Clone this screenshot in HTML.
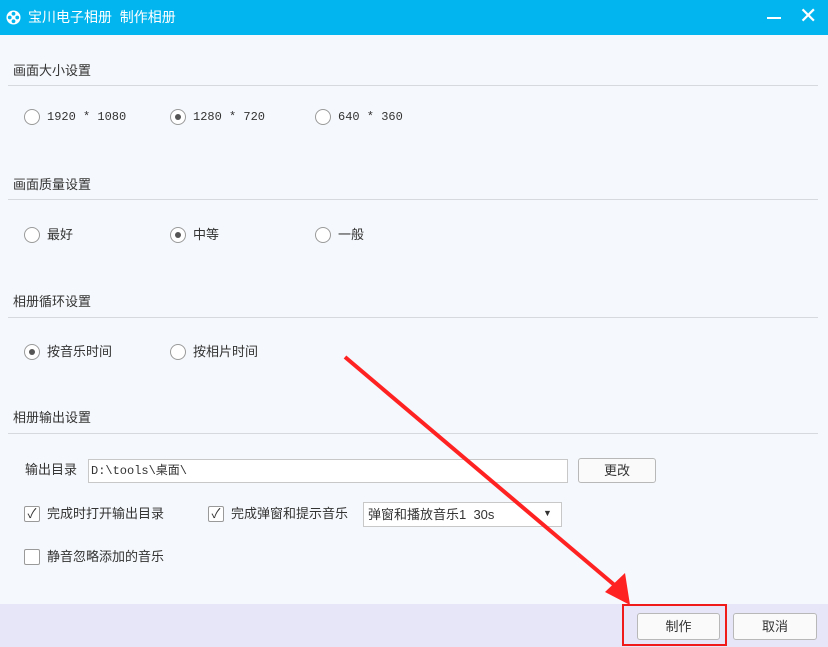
<!DOCTYPE html>
<html><head><meta charset="utf-8"><style>
*{margin:0;padding:0;box-sizing:border-box}
body{width:828px;height:647px;overflow:hidden;background:#f5f8fc;font-family:"Liberation Sans","Noto Sans CJK SC",sans-serif;font-size:13px;color:#333;position:relative}
.abs{position:absolute}
.title{left:0;top:0;width:828px;height:35px;background:#02b5ee;color:#fff;font-size:14px}
.hd{left:13px;font-size:13px;color:#333;line-height:16px}
.ln{left:8px;width:810px;height:1px;background:#d6d9de}
.r{width:16px;height:16px;border:1px solid #9a9a9a;border-radius:50%;background:#fff}
.r.on::after{content:"";position:absolute;left:4px;top:4px;width:6px;height:6px;border-radius:50%;background:#555}
.lab{font-size:13px;color:#333;line-height:16px}
.mono{font-family:"Liberation Mono","Noto Sans CJK SC",monospace;font-size:12px}
.cb{width:16px;height:16px;border:1px solid #9a9a9a;background:#fff;border-radius:2px;font-size:13px;line-height:14px;text-align:center;color:#333}
.btn{border:1px solid #b8b8b8;border-radius:3px;background:#fafafa;text-align:center;font-size:13px}
</style></head><body>
<div class="abs title">
 <svg class="abs" style="left:6px;top:10px" width="15" height="15" viewBox="0 0 16 16"><circle cx="8" cy="8" r="7.5" fill="#fff"/><circle cx="8" cy="4" r="2" fill="#02b5ee"/><circle cx="8" cy="12" r="2" fill="#02b5ee"/><circle cx="4" cy="8" r="2" fill="#02b5ee"/><circle cx="12" cy="8" r="2" fill="#02b5ee"/></svg>
 <span class="abs" style="left:28px;top:8px;line-height:18px">宝川电子相册&nbsp;&nbsp;制作相册</span>
 <div class="abs" style="left:767px;top:17px;width:14px;height:2px;background:#fff"></div>
 <span class="abs" style="left:799px;top:5px;font-size:22px;line-height:22px">✕</span>
</div>

<div class="abs hd" style="top:63px">画面大小设置</div><div class="abs ln" style="top:85px"></div>
<div class="abs r" style="left:24px;top:109px"></div><span class="abs lab mono" style="left:47px;top:109px">1920 * 1080</span>
<div class="abs r on" style="left:170px;top:109px"></div><span class="abs lab mono" style="left:193px;top:109px">1280 * 720</span>
<div class="abs r" style="left:315px;top:109px"></div><span class="abs lab mono" style="left:338px;top:109px">640 * 360</span>

<div class="abs hd" style="top:177px">画面质量设置</div><div class="abs ln" style="top:199px"></div>
<div class="abs r" style="left:24px;top:227px"></div><span class="abs lab" style="left:47px;top:227px">最好</span>
<div class="abs r on" style="left:170px;top:227px"></div><span class="abs lab" style="left:193px;top:227px">中等</span>
<div class="abs r" style="left:315px;top:227px"></div><span class="abs lab" style="left:338px;top:227px">一般</span>

<div class="abs hd" style="top:294px">相册循环设置</div><div class="abs ln" style="top:317px"></div>
<div class="abs r on" style="left:24px;top:344px"></div><span class="abs lab" style="left:47px;top:344px">按音乐时间</span>
<div class="abs r" style="left:170px;top:344px"></div><span class="abs lab" style="left:193px;top:344px">按相片时间</span>

<div class="abs hd" style="top:410px">相册输出设置</div><div class="abs ln" style="top:433px"></div>
<span class="abs lab" style="left:25px;top:462px">输出目录</span>
<div class="abs" style="left:88px;top:459px;width:480px;height:24px;border:1px solid #c8c8c8;background:#fff"><span class="abs mono" style="left:2px;top:4px;line-height:14px">D:\tools\桌面\</span></div>
<div class="abs btn" style="left:578px;top:458px;width:78px;height:25px;line-height:23px">更改</div>

<div class="abs cb" style="left:24px;top:506px">✓</div><span class="abs lab" style="left:47px;top:506px">完成时打开输出目录</span>
<div class="abs cb" style="left:208px;top:506px">✓</div><span class="abs lab" style="left:231px;top:506px">完成弹窗和提示音乐</span>
<div class="abs" style="left:363px;top:502px;width:199px;height:25px;border:1px solid #c8c8c8;background:#fff"><span class="abs" style="left:4px;top:4px;line-height:16px">弹窗和播放音乐1&nbsp;&nbsp;30s</span><span class="abs" style="left:179px;top:5px;font-size:9px">▼</span></div>

<div class="abs cb" style="left:24px;top:549px"></div><span class="abs lab" style="left:47px;top:549px">静音忽略添加的音乐</span>

<div class="abs" style="left:0;top:604px;width:828px;height:43px;background:#e6e6f8"></div>
<div class="abs btn" style="left:637px;top:613px;width:83px;height:27px;line-height:25px">制作</div>
<div class="abs btn" style="left:733px;top:613px;width:84px;height:27px;line-height:25px">取消</div>
<div class="abs" style="left:622px;top:604px;width:105px;height:42px;border:2px solid #f01a1a"></div>

<svg class="abs" style="left:0;top:0" width="828" height="647">
 <line x1="345" y1="357" x2="618" y2="588" stroke="#f22" stroke-width="4"/>
 <polygon points="630,605 605,592 625,573" fill="#f22"/>
</svg>
</body></html>
